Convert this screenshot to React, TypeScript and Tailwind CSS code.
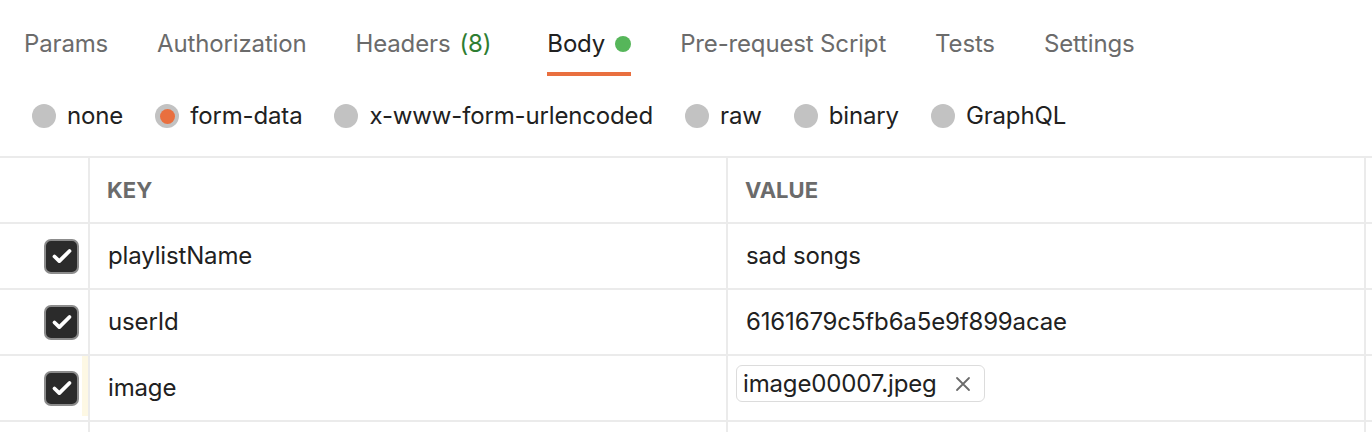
import React from 'react';

const tabs = ['Params', 'Authorization', 'Headers', 'Body', 'Pre-request Script', 'Tests', 'Settings'];
const modes = ['none', 'form-data', 'x-www-form-urlencoded', 'raw', 'binary', 'GraphQL'];

const rows = [
  { key: 'playlistName', value: 'sad songs' },
  { key: 'userId', value: '6161679c5fb6a5e9f899acae' },
  { key: 'image', value: 'image00007.jpeg', file: true },
];

function Checkbox() {
  return (
    <div className="w-[35px] h-[35px] rounded-[7px] bg-[#2b2b2b] border-2 border-[#8c8c8c] flex items-center justify-center">
      <svg width="22" height="22" viewBox="0 0 22 22" fill="none">
        <path d="M3.5 11.5l4.8 4.6L18.5 6" stroke="white" strokeWidth="3.8" strokeLinecap="round" strokeLinejoin="round" />
      </svg>
    </div>
  );
}

function Radio({ checked }: { checked?: boolean }) {
  return (
    <span className="w-[24px] h-[24px] rounded-full bg-[#c2c2c2] flex items-center justify-center shrink-0">
      {checked && <span className="w-[15px] h-[15px] rounded-full bg-[#e96f3f]" />}
    </span>
  );
}

export default function App() {
  return (
    <div className="w-[1372px] h-[432px] overflow-hidden bg-white text-[24px] tracking-[-0.15px] text-[#212121] font-['Inter',sans-serif]">
      <div className="h-[76px] flex pl-[24px] gap-[49px]">
        {tabs.map((t) => {
          const active = t === 'Body';
          return (
            <div
              key={t}
              className={`flex items-center pt-[16px] border-b-4 ${active ? 'border-[#e96f3f] text-[#212121] ml-[7px]' : 'border-transparent text-[#6b6b6b]'}`}
            >
              <span>{t}</span>
              {t === 'Headers' && <span className="ml-[9px] text-[#2e7d32]">(8)</span>}
              {active && <span className="ml-[10px] w-[16px] h-[16px] rounded-full bg-[#56b65a]" />}
            </div>
          );
        })}
      </div>

      <div className="h-[80px] flex items-center pl-[32px] gap-[32px]">
        {modes.map((m) => (
          <label key={m} className="flex items-center gap-[11px]">
            <Radio checked={m === 'form-data'} />
            <span>{m}</span>
          </label>
        ))}
      </div>

      <div className="border-t-2 border-[#ebebeb]">
        <div className="grid grid-cols-[88px_638px_638px_1fr] h-[66px] border-b-2 border-[#ebebeb]">
          <div />
          <div className="border-l-2 border-[#ebebeb] flex items-center pl-[17px] text-[22px] font-bold tracking-normal text-[#6b6b6b]">KEY</div>
          <div className="border-l-2 border-[#ebebeb] flex items-center pl-[17px] text-[22px] font-bold tracking-normal text-[#6b6b6b]">VALUE</div>
          <div className="border-l-2 border-[#ebebeb]" />
        </div>
        {rows.map((r) => (
          <div key={r.key} className="grid grid-cols-[88px_638px_638px_1fr] h-[66px] border-b-2 border-[#ebebeb]">
            <div className="flex items-center justify-end">
              <Checkbox />
              <div className={`ml-[3px] w-[6px] self-stretch mb-[4px] ${r.file ? 'bg-[#fdf8e4]' : ''}`} />
            </div>
            <div className="border-l-2 border-[#ebebeb] flex items-center pl-[18px]">{r.key}</div>
            <div className="border-l-2 border-[#ebebeb] flex items-center pl-[18px]">
              {r.file ? (
                <div className="-ml-[10px] mb-[9px] h-[37px] flex items-center border border-[#dcdcdc] rounded-[6px] pl-[6px] pr-[13px]">
                  <span>{r.value}</span>
                  <svg className="ml-[18px]" width="16" height="16" viewBox="0 0 16 16" fill="none">
                    <path d="M2 2l12 12M14 2L2 14" stroke="#6b6b6b" strokeWidth="1.8" strokeLinecap="round" />
                  </svg>
                </div>
              ) : (
                r.value
              )}
            </div>
            <div className="border-l-2 border-[#ebebeb]" />
          </div>
        ))}
        <div className="grid grid-cols-[88px_638px_638px_1fr] h-[66px]">
          <div />
          <div className="border-l-2 border-[#ebebeb]" />
          <div className="border-l-2 border-[#ebebeb]" />
          <div className="border-l-2 border-[#ebebeb]" />
        </div>
      </div>
    </div>
  );
}
